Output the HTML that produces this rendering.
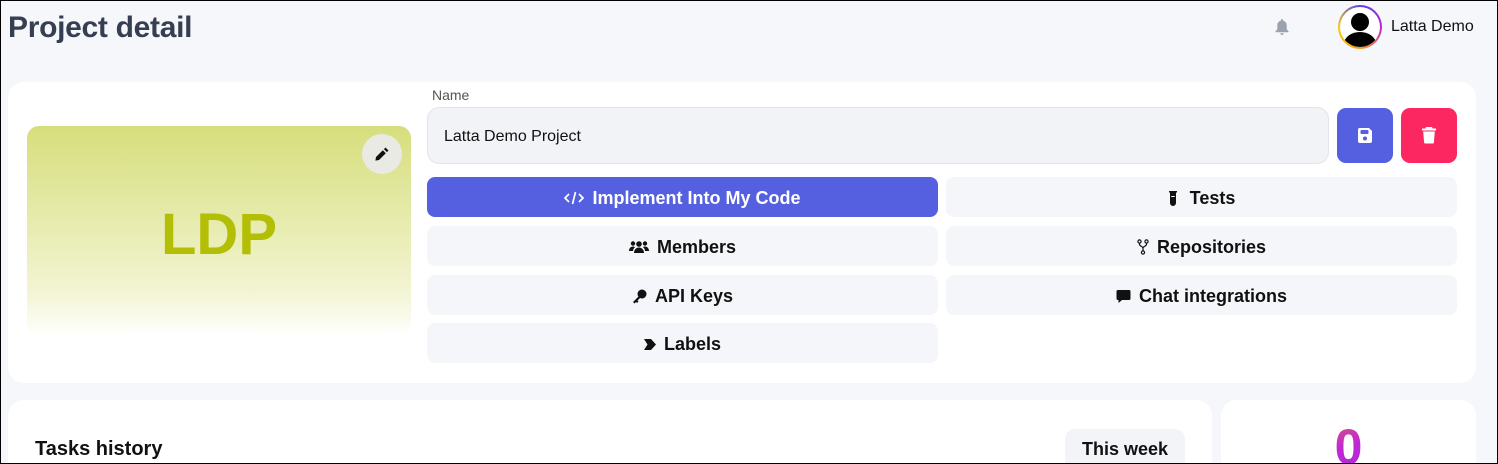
<!DOCTYPE html>
<html><head><meta charset="utf-8"><style>
*{box-sizing:border-box;margin:0;padding:0}
html,body{width:1498px;height:464px;overflow:hidden}
body{background:#f6f7fb;font-family:"Liberation Sans",sans-serif;position:relative;color:#111}
.frame{position:absolute;left:0;top:0;width:1498px;height:464px;border:1px solid #000;z-index:10;pointer-events:none}
.abs{position:absolute}
h1{position:absolute;left:8px;top:11px;font-size:30px;font-weight:bold;color:#353f51;letter-spacing:-0.3px}
.card{position:absolute;background:#fff;border-radius:16px}
.btn{position:absolute;height:40px;border-radius:8px;background:#f5f6f9;display:flex;align-items:center;justify-content:center;font-weight:bold;font-size:18px;gap:8px;color:#111;padding-top:2px}
.btn svg{display:block}
</style></head><body>
<div class="frame"></div>
<h1>Project detail</h1>
<svg class="abs" style="left:1274px;top:18px" width="16" height="18" viewBox="0 0 16 18"><path d="M8 1c-.6 0-1 .4-1 1v.6C4.7 3.1 3.3 5 3.3 7.2v4L1.5 13.3v1h13v-1l-1.8-2.1v-4C12.7 5 11.3 3.1 9 2.6V2c0-.6-.4-1-1-1zM6.3 15.3a1.7 1.7 0 0 0 3.4 0z" fill="#9ca3af"/></svg>
<div class="abs" style="left:1338px;top:5px;width:44px;height:44px;border-radius:50%;background:conic-gradient(#5b3ee0,#c026d3,#f59e0b,#facc15,#5b3ee0);padding:2px"><div style="width:40px;height:40px;border-radius:50%;background:#fff;overflow:hidden;position:relative"><div class="abs" style="left:11px;top:6px;width:18px;height:18px;border-radius:50%;background:#000"></div><div class="abs" style="left:4px;top:25px;width:32px;height:24px;border-radius:50% 50% 0 0;background:#000"></div></div></div>
<div class="abs" style="left:1391px;top:18px;font-size:16px;color:#111">Latta Demo</div>

<div class="card" style="left:8px;top:82px;width:1468px;height:301px"></div>
<div class="abs" style="left:27px;top:126px;width:384px;height:210px;border-radius:12px;background:linear-gradient(#d6de7c,#f3f5d4 80%,#fff)"></div>
<div class="abs" style="left:27px;top:201px;width:384px;text-align:center;font-size:58px;font-weight:bold;color:#b3bf05">LDP</div>
<div class="abs" style="left:362px;top:134px;width:40px;height:40px;border-radius:50%;background:#eaeae4"></div>
<svg class="abs" style="left:374px;top:146px" width="16" height="16" viewBox="0 0 16 16"><path d="M11.5 1.5l3 3-1.6 1.6-3-3zM8.8 4.2l3 3L5 14l-3.6.6L2 11z" fill="#111"/></svg>

<div class="abs" style="left:432px;top:87px;font-size:14px;color:#555">Name</div>
<div class="abs" style="left:427px;top:107px;width:902px;height:57px;border-radius:12px;background:#f1f3f6;border:1px solid #e2e5e9;padding-left:16px;padding-top:2px;display:flex;align-items:center;font-size:16px;color:#111">Latta Demo Project</div>
<div class="abs" style="left:1337px;top:108px;width:56px;height:55px;border-radius:9px;background:#5460df"></div>
<svg class="abs" style="left:1357px;top:127px" width="16" height="17" viewBox="0 0 16 17"><path d="M2 1h10l3 3v10a2 2 0 0 1-2 2H3a2 2 0 0 1-2-2V3a2 2 0 0 1 1-2z" fill="#fff"/><rect x="3.5" y="3" width="8" height="4" rx="1" fill="#5460df"/><circle cx="8" cy="11.5" r="2" fill="#5460df"/></svg>
<div class="abs" style="left:1401px;top:108px;width:56px;height:55px;border-radius:9px;background:#fc2761"></div>
<svg class="abs" style="left:1421px;top:126px" width="16" height="18" viewBox="0 0 16 18"><path d="M5 1h6l.6 1.5H15v2H1v-2h3.4zM2.2 5.5h11.6l-.9 11a1 1 0 0 1-1 1H4.1a1 1 0 0 1-1-1z" fill="#fff"/></svg>

<div class="btn" style="left:427px;top:177px;width:511px;background:#5460e0;color:#fff"><svg width="20" height="14" viewBox="0 0 20 14"><path d="M5 3L1 7l4 4M15 3l4 4-4 4M11.5 1L8.5 13" stroke="#fff" stroke-width="1.7" fill="none"/></svg>Implement Into My Code</div>
<div class="btn" style="left:946px;top:177px;width:511px"><svg width="10" height="16" viewBox="0 0 10 16"><path d="M1 1h8v1.5H8V13a3 3 0 0 1-6 0V2.5H1z" fill="#111"/><rect x="3.3" y="6" width="3.4" height="1" fill="#fff"/></svg><span style="margin-left:4px">Tests</span></div>
<div class="btn" style="left:427px;top:226px;width:511px"><svg width="20" height="14" viewBox="0 0 20 14"><circle cx="10" cy="4" r="2.8" fill="#111"/><circle cx="4" cy="3.5" r="2.2" fill="#111"/><circle cx="16" cy="3.5" r="2.2" fill="#111"/><path d="M5 13c0-3 2-5.5 5-5.5s5 2.5 5 5.5zM0 11c0-2.5 1.5-4.5 4-4.5 1 0 1.5.3 2 .6C4.8 8.2 4 9.5 4 11zM20 11c0-2.5-1.5-4.5-4-4.5-1 0-1.5.3-2 .6 1.2 1.1 2 2.4 2 3.9z" fill="#111"/></svg>Members</div>
<div class="btn" style="left:946px;top:226px;width:511px"><svg width="12" height="16" viewBox="0 0 12 16"><circle cx="2.5" cy="2.5" r="1.6" stroke="#111" stroke-width="1.2" fill="none"/><circle cx="9.5" cy="2.5" r="1.6" stroke="#111" stroke-width="1.2" fill="none"/><circle cx="6" cy="13.5" r="1.6" stroke="#111" stroke-width="1.2" fill="none"/><path d="M2.5 4v1.5c0 1.5 3.5 2 3.5 3.5v3M9.5 4v1.5C9.5 7 6 7.5 6 9" stroke="#111" stroke-width="1.2" fill="none"/></svg>Repositories</div>
<div class="btn" style="left:427px;top:275px;width:511px"><svg width="15" height="15" viewBox="0 0 15 15"><circle cx="10" cy="5" r="4.5" fill="#111"/><path d="M7 7L1 13l1.5 1.5L4 13l1 1 1.5-1.5-1-1L9 8z" fill="#111"/></svg>API Keys</div>
<div class="btn" style="left:946px;top:275px;width:511px"><svg width="15" height="15" viewBox="0 0 15 15"><path d="M2 1h11a1.5 1.5 0 0 1 1.5 1.5v7A1.5 1.5 0 0 1 13 11H6l-3.5 3v-3H2A1.5 1.5 0 0 1 .5 9.5v-7A1.5 1.5 0 0 1 2 1z" fill="#111"/></svg>Chat integrations</div>
<div class="btn" style="left:427px;top:323px;width:511px"><svg width="12" height="11" viewBox="0 0 12 11"><path d="M0 0h7l5 5.5L7 11H0l3.5-5.5z" fill="#111"/></svg>Labels</div>

<div class="card" style="left:8px;top:400px;width:1204px;height:80px"></div>
<div class="abs" style="left:35px;top:438px;font-size:20px;font-weight:bold">Tasks history</div>
<div class="abs" style="left:1065px;top:429px;width:120px;height:50px;border-radius:10px;background:#f3f4f8;text-align:center;padding-top:10px;font-size:18px;font-weight:bold">This week</div>
<div class="card" style="left:1221px;top:400px;width:255px;height:80px"></div>
<div class="abs" style="left:1221px;top:418px;width:255px;text-align:center;font-size:50px;font-weight:bold;background:linear-gradient(160deg,#f59e0b,#c026d3 50%,#9333ea);-webkit-background-clip:text;background-clip:text;color:transparent">0</div>
</body></html>
